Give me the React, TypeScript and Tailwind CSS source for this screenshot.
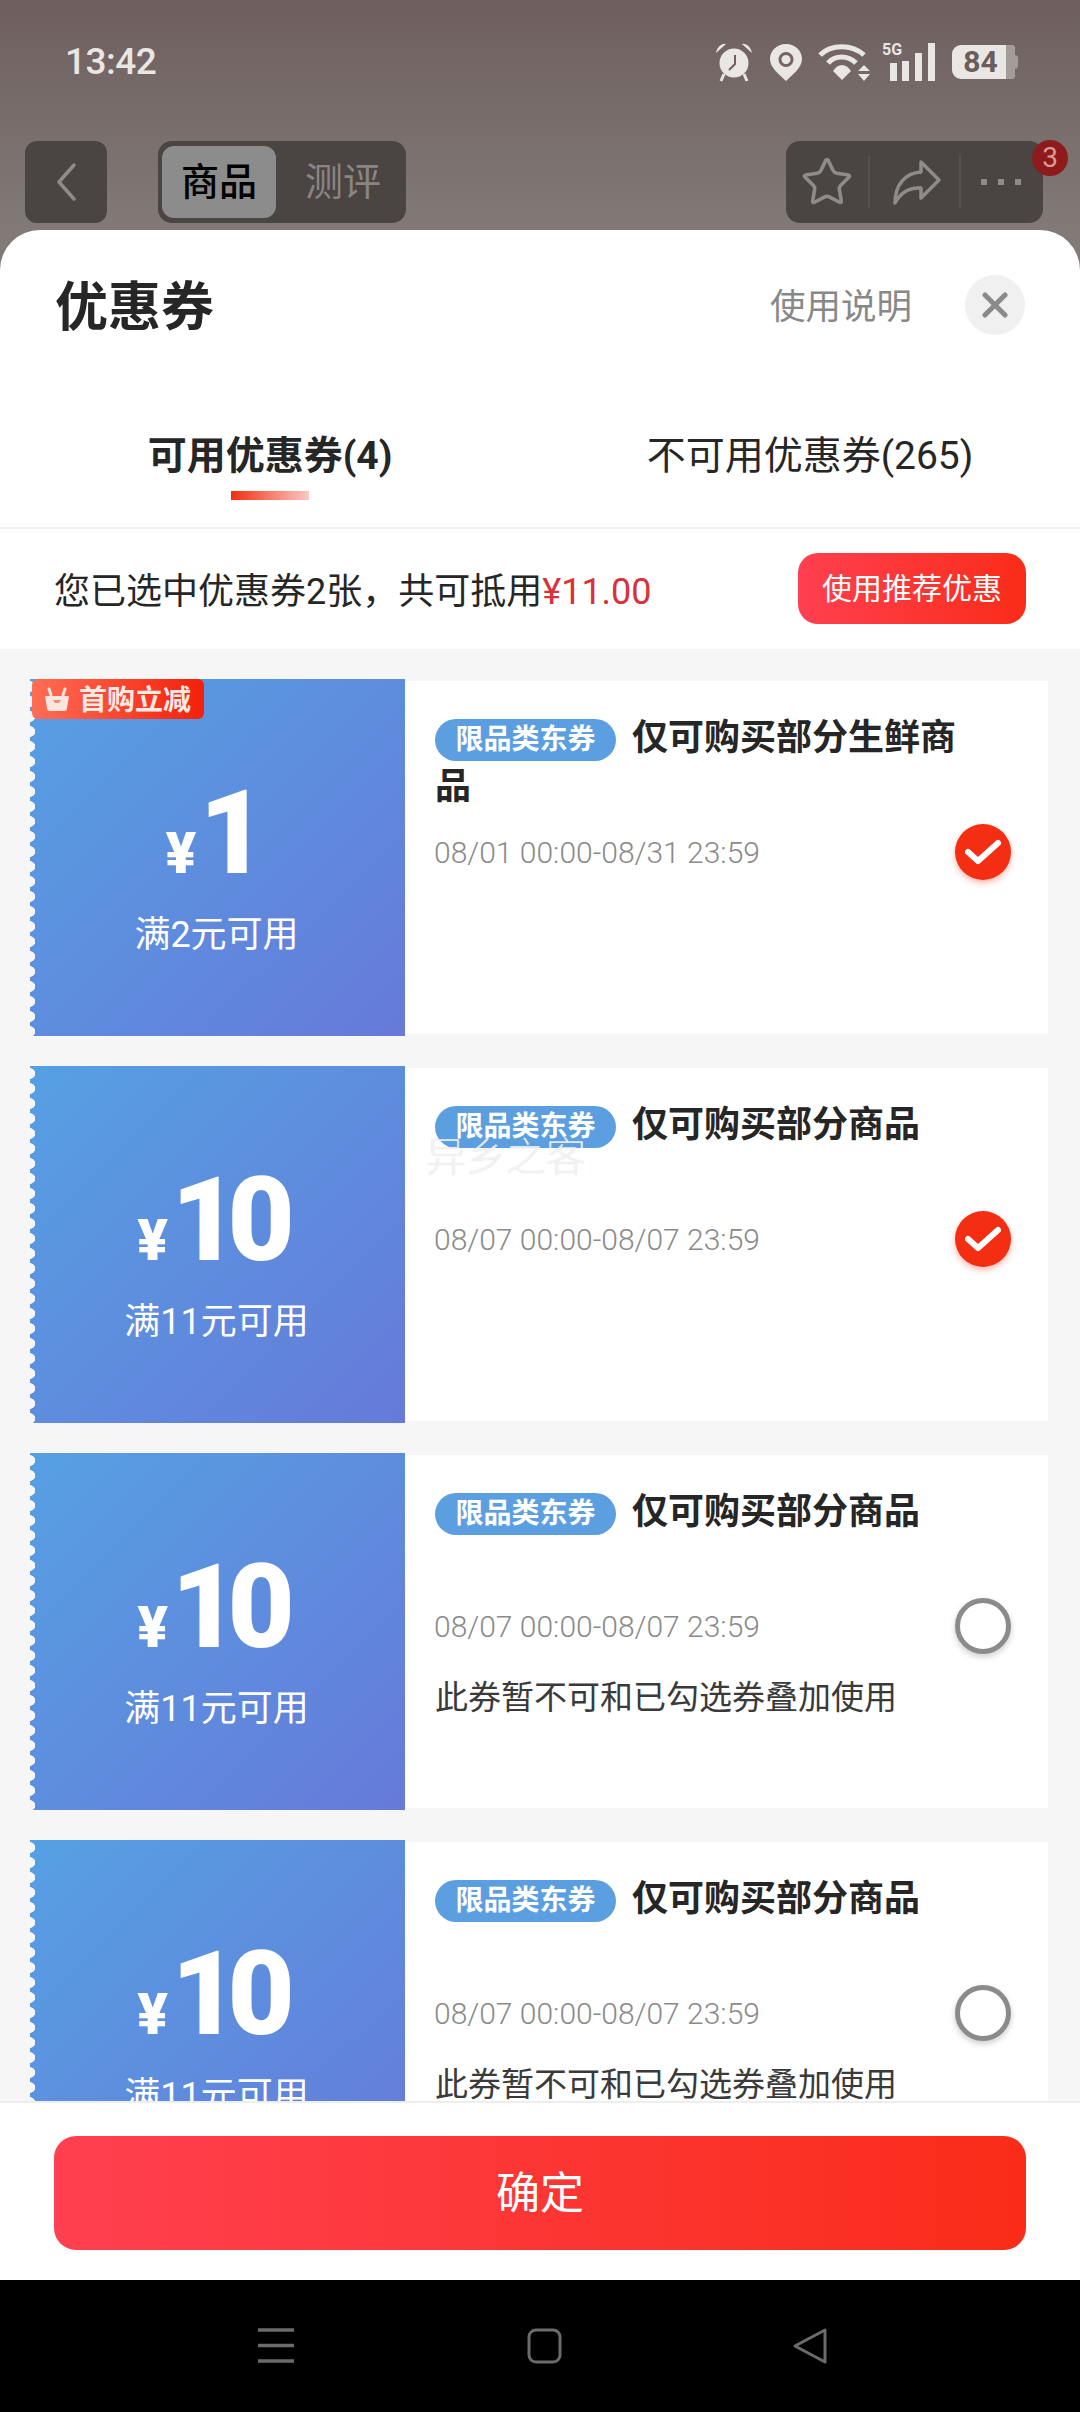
import { Star } from "lucide-react";

const font = { fontFamily: '"Roboto", "Noto Sans CJK SC", sans-serif' };

function StatusIcons() {
  return (
    <div className="flex items-center h-[40px]">
      <svg width="38" height="40" viewBox="0 0 38 40" className="mr-[16px]">
        <circle cx="19" cy="21" r="14.5" fill="#e9e6e4" />
        <path d="M1 11 C2 5 7 1 11 2 Z M37 11 C36 5 31 1 27 2 Z" fill="#e9e6e4" />
        <path d="M9 32 L6 39 M29 32 L32 39" stroke="#e9e6e4" strokeWidth="3" />
        <path d="M20 13 V22 L14 28" stroke="#6f6160" strokeWidth="2" fill="none" />
      </svg>
      <svg width="34" height="38" viewBox="0 0 34 38" className="mr-[15px]">
        <path fillRule="evenodd" d="M17 1 C7.5 1 1 8 1 16 C1 25 11 32 17 38 C23 32 33 25 33 16 C33 8 26.5 1 17 1 Z M17 9 a7.5 7.5 0 1 0 0.01 0 Z M17 12 a4.5 4.5 0 1 1 -0.01 0 Z" fill="#e9e6e4" />
      </svg>
      <svg width="54" height="38" viewBox="0 0 54 38" className="mr-[12px]">
        <path d="M2 12 C13 1 34 1 46 12" stroke="#e9e6e4" strokeWidth="5" fill="none" />
        <path d="M10 20 C17 12 30 12 38 20" stroke="#e9e6e4" strokeWidth="5" fill="none" />
        <path d="M15 28 C20 20 28 20 33 28 L24 37 Z" fill="#e9e6e4" />
        <path d="M46 22 L52 28 H40 Z M46 38 L52 31 H40 Z" fill="#e9e6e4" />
      </svg>
      <div className="relative w-[52px] h-[38px] mr-[16px]">
        <span className="absolute left-[-2px] top-[-3px] text-[16px] leading-[20px] font-bold text-[#e9e6e4]">5G</span>
        <svg width="52" height="38" viewBox="0 0 52 38">
          <rect x="6" y="20" width="7" height="18" fill="#e9e6e4" />
          <rect x="18" y="18" width="7" height="20" fill="#e9e6e4" />
          <rect x="31" y="10" width="7" height="28" fill="#e9e6e4" />
          <rect x="44" y="0" width="7" height="38" fill="#e9e6e4" />
        </svg>
      </div>
      <div className="flex items-center">
        <div className="w-[63px] h-[34px] rounded-l-[9px] rounded-r-[3px] bg-[linear-gradient(90deg,#e9e6e4_86%,#a39c99_86%)] flex items-center justify-center pr-[6px]">
          <span className="text-[30px] leading-[34px] font-bold text-[#6a5d5c]">84</span>
        </div>
        <div className="w-[3px] h-[14px] rounded-r-[3px] bg-[#a39c99]" />
      </div>
    </div>
  );
}

function TopBar() {
  return (
    <div className="h-[230px] bg-[linear-gradient(180deg,#6e5f5e,#817a77)] pt-[42px] shrink-0">
      <div className="flex items-center justify-between pl-[65px] pr-[62px] h-[40px]">
        <span className="text-[37px] font-medium text-[#e9e6e4] tracking-[-0.5px]">13:42</span>
        <StatusIcons />
      </div>
      <div className="mt-[59px] flex items-center h-[82px] pl-[25px]">
        <div className="w-[82px] h-[82px] rounded-[12px] bg-[#4a4443] flex items-center justify-center">
          <svg width="22" height="38" viewBox="0 0 22 38">
            <path d="M19 2 L4 19 L19 36" stroke="#8f8b89" strokeWidth="3.5" fill="none" strokeLinecap="round" strokeLinejoin="round" />
          </svg>
        </div>
        <div className="ml-[51px] w-[248px] h-[82px] rounded-[14px] bg-[#4a4443] flex items-center pl-[4px]">
          <div className="w-[114px] h-[72px] rounded-[12px] bg-[#8c8c8c] flex items-center justify-center text-[38px] font-medium text-black">商品</div>
          <div className="w-[126px] pl-[8px] text-center text-[38px] text-[#8a8583]">测评</div>
        </div>
        <div className="ml-[380px] relative w-[257px] h-[82px] rounded-[14px] bg-[#4a4443] flex items-center">
          <div className="w-[84px] flex justify-center border-r-2 border-[#575150] h-[52px] items-center">
            <Star size={54} strokeWidth={1.6} color="#8f8b89" />
          </div>
          <div className="w-[91px] flex justify-center border-r-2 border-[#575150] h-[52px] items-center pl-[5px]">
            <svg width="50" height="46" viewBox="0 0 50 46">
              <path d="M29 3 L47 21 L29 39 V29 C17 28 9 33 3 44 C3 26 13 14 29 13 Z" stroke="#8f8b89" strokeWidth="3.5" fill="none" strokeLinejoin="round" />
            </svg>
          </div>
          <div className="flex-1 flex justify-center gap-[11px] pr-[2px]">
            <span className="w-[6px] h-[6px] bg-[#8f8b89]" />
            <span className="w-[6px] h-[6px] bg-[#8f8b89]" />
            <span className="w-[6px] h-[6px] bg-[#8f8b89]" />
          </div>
          <div className="absolute left-[246px] top-[-1px] w-[36px] h-[36px] rounded-full bg-[#8e1a1c] flex items-center justify-center text-[28px] leading-none text-[#d99a96]">3</div>
        </div>
      </div>
    </div>
  );
}

type CouponProps = {
  amount: string;
  sub: string;
  title: string;
  date: string;
  checked?: boolean;
  hint?: boolean;
  first?: boolean;
  watermark?: boolean;
};

function Coupon({ amount, sub, title, date, checked, hint, first, watermark }: CouponProps) {
  return (
    <div className="ml-[30px] w-[1018px] h-[357px] flex items-center shrink-0">
      <div className="relative w-[375px] h-[357px] bg-[linear-gradient(135deg,#56a0e3,#667ad9)] text-white flex flex-col items-center pt-[96px] overflow-hidden shrink-0">
        <div className="absolute left-0 top-0 bottom-0 w-[6px] bg-[radial-gradient(circle_at_0_50%,#f6f6f6_5px,transparent_5.5px)] bg-[length:6px_15px]" />
        {first && (
          <div className="absolute left-[2px] top-0 w-[172px] h-[40px] rounded-[6px] bg-[linear-gradient(90deg,#ff6d55,#f4200b)] flex items-center pl-[12px] gap-[9px]">
            <svg width="26" height="26" viewBox="0 0 26 26">
              <path d="M1 10 H25 L23 22 a3 3 0 0 1 -3 3 H6 a3 3 0 0 1 -3 -3 Z" fill="#fde6e0" />
              <path d="M7 9 L5 3 M19 9 L21 3" stroke="#fde6e0" strokeWidth="3" strokeLinecap="round" />
              <path d="M9 14 H17 L15 17 H11 Z" fill="#f58a78" />
            </svg>
            <span className="pt-[3px] text-[28px] leading-[40px] font-bold text-[#fde9e4] whitespace-nowrap">首购立减</span>
          </div>
        )}
        <div className="flex items-baseline h-[116px] leading-[116px] -ml-[3px]">
          <span className="text-[57px] font-black mr-[3px]">¥</span>
          <span className="text-[116px] font-black tracking-[-11px] pr-[11px]">{amount}</span>
        </div>
        <div className="mt-[22px] text-[36px] leading-[44px] -ml-[2px]">{sub}</div>
      </div>
      <div className="relative flex-1 h-[353px] bg-white pl-[30px] pr-[37px] pt-[33px]">
        <div className="h-[100px] pr-[43px] text-[36px] leading-[49px] font-bold text-[#262626]">
          <span className="inline-block align-[1px] w-[181px] h-[42px] rounded-full bg-[#5b9fe0] text-white text-center text-[28px] leading-[42px] mr-[16px]">限品类东券</span>
          {title}
        </div>
        <div className="mt-[10px] h-[56px] flex items-center justify-between">
          <span className="-ml-px text-[30px] font-light text-[#8a8a8a] whitespace-nowrap">{date}</span>
          {checked ? (
            <div className="w-[56px] h-[56px] rounded-full bg-[#f32e12] shadow-[0_3px_6px_rgba(243,46,18,0.35)] flex items-center justify-center">
              <svg width="36" height="26" viewBox="0 0 36 26">
                <path d="M3 13 L13 22 L33 4" stroke="#fff" strokeWidth="6" fill="none" strokeLinecap="round" strokeLinejoin="round" />
              </svg>
            </div>
          ) : (
            <div className="w-[56px] h-[56px] rounded-full border-[5px] border-[#8b8b8b] bg-white shadow-[0_3px_6px_rgba(0,0,0,0.2)]" />
          )}
        </div>
        {hint && <div className="mt-[22px] text-[33px] leading-[44px] text-[#3a3a3a] whitespace-nowrap">此券暂不可和已勾选券叠加使用</div>}
        {watermark && (
          <div className="absolute left-[21px] top-[68px] text-[40px] font-light leading-[44px] text-white/75 [text-shadow:0_0_1px_rgba(170,170,170,0.6)] whitespace-nowrap">异乡之客</div>
        )}
      </div>
    </div>
  );
}

export default function App() {
  return (
    <div className="w-[1080px] h-[2412px] bg-[#817a77] flex flex-col overflow-hidden" style={font}>
      <TopBar />
      <div className="flex-1 min-h-0 flex flex-col bg-white rounded-t-[40px] overflow-hidden">
        <div className="h-[150px] shrink-0 pl-[55px] pr-[55px] flex items-center justify-between">
          <span className="text-[53px] font-bold text-[#262626] leading-none pt-[6px]">优惠券</span>
          <div className="flex items-center">
            <span className="text-[35.5px] text-[#888888] mr-[53px] pt-[5px]">使用说明</span>
            <div className="w-[60px] h-[60px] rounded-full bg-[#f0f0f0] flex items-center justify-center">
              <svg width="26" height="26" viewBox="0 0 26 26">
                <path d="M3 3 L23 23 M23 3 L3 23" stroke="#8a8a8a" strokeWidth="5" strokeLinecap="round" />
              </svg>
            </div>
          </div>
        </div>
        <div className="h-[149px] shrink-0 flex border-b-2 border-[#f0f0f0]">
          <div className="w-[540px] flex flex-col items-center pt-[54px]">
            <span className="text-[39px] leading-[44px] font-bold text-[#262626]">可用优惠券(4)</span>
            <span className="mt-[13px] w-[78px] h-[9px] bg-[linear-gradient(90deg,#f32e12,#f9c9c4)]" />
          </div>
          <div className="w-[540px] flex flex-col items-center pt-[54px]">
            <span className="text-[39px] leading-[44px] text-[#262626]">不可用优惠券(265)</span>
          </div>
        </div>
        <div className="h-[120px] shrink-0 px-[54px] flex items-center justify-between">
          <span className="text-[36px] text-[#262626] pt-[5px]">
            您已选中优惠券2张，共可抵用<span className="text-[#d9303a]">¥11.00</span>
          </span>
          <div className="w-[228px] h-[71px] -mt-[1px] rounded-[20px] bg-[linear-gradient(90deg,#ff4050,#fa2c19)] flex items-center justify-center text-[30px] text-white">使用推荐优惠</div>
        </div>
        <div className="flex-1 min-h-0 overflow-hidden bg-[#f6f6f6] pt-[30px] flex flex-col gap-[30px]">
          <Coupon first amount="1" sub="满2元可用" title="仅可购买部分生鲜商品" date="08/01 00:00-08/31 23:59" checked />
          <Coupon watermark amount="10" sub="满11元可用" title="仅可购买部分商品" date="08/07 00:00-08/07 23:59" checked />
          <Coupon amount="10" sub="满11元可用" title="仅可购买部分商品" date="08/07 00:00-08/07 23:59" hint />
          <Coupon amount="10" sub="满11元可用" title="仅可购买部分商品" date="08/07 00:00-08/07 23:59" hint />
        </div>
        <div className="h-[179px] shrink-0 bg-white border-t-2 border-[#eeeeee] px-[54px] pt-[33px]">
          <div className="h-[114px] pt-[2px] rounded-[22px] bg-[linear-gradient(90deg,#ff4050,#fa2c19)] flex items-center justify-center text-[44px] text-white">确定</div>
        </div>
      </div>
      <div className="h-[132px] shrink-0 bg-black flex items-start pl-[258px] pt-[48px]">
        <svg width="36" height="35" viewBox="0 0 36 35" className="mr-[233px]">
          <path d="M0 2 H36 M0 17.5 H36 M0 33 H36" stroke="#6b6b6b" strokeWidth="3.5" />
        </svg>
        <svg width="35" height="36" viewBox="0 0 35 36" className="mr-[230px]">
          <rect x="2" y="2" width="31" height="32" rx="7" stroke="#6b6b6b" strokeWidth="3" fill="none" />
        </svg>
        <svg width="36" height="36" viewBox="0 0 36 36">
          <path d="M33 2 L3 18 L33 34 Z" stroke="#6b6b6b" strokeWidth="3" fill="none" strokeLinejoin="round" />
        </svg>
      </div>
    </div>
  );
}
